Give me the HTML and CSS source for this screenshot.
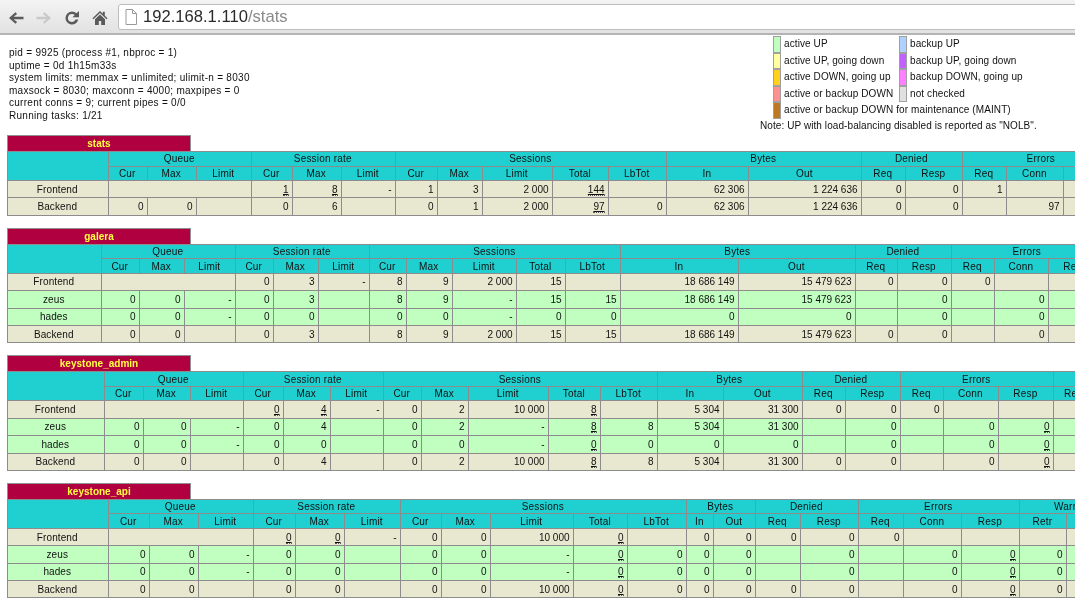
FILE: index.html
```html
<!DOCTYPE html>
<html lang="en">
<head>
<meta charset="utf-8">
<title>Statistics Report for HAProxy</title>
<link rel="stylesheet" href="styles.css">
</head>
<body>
<header class="toolbar">
  <svg class="nav" viewBox="0 0 16 16"><path class="ic-dark" d="M7.5 2.2 1 8l6.5 5.8 1.6-1.7L5.6 9.2H15.5V6.8H5.6l3.5-2.9z"/></svg>
  <svg class="nav" viewBox="0 0 16 16"><path class="ic-light" d="M8.5 2.2 15 8l-6.5 5.8-1.6-1.7 3.5-2.9H.5V6.8h9.900L6.900 3.900z"/></svg>
  <svg class="nav" viewBox="0 0 16 16"><path class="ic-dark" d="M8 1.500a6.500 6.500 0 1 0 6.300 8.100h-2.700A4 4 0 1 1 8 4c1.100 0 2 .4 2.700 1.100L8.500 7.300H15V.9l-2.500 2.400A6.500 6.500 0 0 0 8 1.500z"/></svg>
  <svg class="nav" viewBox="0 0 16 16"><path class="ic-dark" d="M8 1 .5 8.300l1 .9L8 3l6.500 6.200 1-.9L12.800 5.700V1.800h-2v2zM3 9.300V15h3.800v-4h2.400v4H13V9.300L8 4.500z"/></svg>
  <div class="address">
    <svg class="doc" viewBox="0 0 12 16"><path class="doc-line" d="M1 .5h6.500L11.500 4.500V15.500H1zM7.500.5v4h4"/></svg>
    <span class="host">192.168.1.110</span><span class="path">/stats</span>
  </div>
</header>

<section class="top">
  <div class="info">
    <div>pid = 9925 (process #1, nbproc = 1)</div>
    <div>uptime = 0d 1h15m33s</div>
    <div>system limits: memmax = unlimited; ulimit-n = 8030</div>
    <div>maxsock = 8030; maxconn = 4000; maxpipes = 0</div>
    <div>current conns = 9; current pipes = 0/0</div>
    <div>Running tasks: 1/21</div>
  </div>
  <div class="legend">
    <div class="legend-grid">
      <i class="sw active3"></i><span>active UP</span>
      <i class="sw backup3"></i><span>backup UP</span>
      <i class="sw active2"></i><span>active UP, going down</span>
      <i class="sw backup2"></i><span>backup UP, going down</span>
      <i class="sw active1"></i><span>active DOWN, going up</span>
      <i class="sw backup1"></i><span>backup DOWN, going up</span>
      <i class="sw active0"></i><span>active or backup DOWN</span>
      <i class="sw unchecked"></i><span>not checked</span>
      <i class="sw maint"></i><span class="wide">active or backup DOWN for maintenance (MAINT)</span>
    </div>
    <div class="note">Note: UP with load-balancing disabled is reported as "NOLB".</div>
  </div>
</section>

<section class="proxy">
  <div class="pxname">stats</div>
  <table class="tbl t-stats">
    <colgroup><col class="w101"><col class="w39"><col class="w49"><col class="w55"><col class="w41"><col class="w49"><col class="w54"><col class="w42"><col class="w45"><col class="w70"><col class="w56"><col class="w58"><col class="w82"><col class="w113"><col class="w44"><col class="w57"><col class="w44"><col class="w57"><col class="w57"></colgroup>
    <thead>
      <tr class="h1"><th rowspan="2"></th><th colspan="3">Queue</th><th colspan="3">Session rate</th><th colspan="5">Sessions</th><th colspan="2">Bytes</th><th colspan="2">Denied</th><th colspan="3">Errors</th></tr>
      <tr class="h2"><th>Cur</th><th>Max</th><th>Limit</th><th>Cur</th><th>Max</th><th>Limit</th><th>Cur</th><th>Max</th><th>Limit</th><th>Total</th><th>LbTot</th><th>In</th><th>Out</th><th>Req</th><th>Resp</th><th>Req</th><th>Conn</th><th>Resp</th></tr>
    </thead>
    <tbody>
      <tr class="frontend"><th>Frontend</th><td colspan="3"></td><td><u>1</u></td><td><u>8</u></td><td>-</td><td>1</td><td>3</td><td>2 000</td><td><u>144</u></td><td></td><td>62 306</td><td>1 224 636</td><td>0</td><td>0</td><td>1</td><td></td><td></td></tr>
      <tr class="frontend"><th>Backend</th><td>0</td><td>0</td><td></td><td>0</td><td>6</td><td></td><td>0</td><td>1</td><td>2 000</td><td><u>97</u></td><td>0</td><td>62 306</td><td>1 224 636</td><td>0</td><td>0</td><td></td><td>97</td><td>0</td></tr>
    </tbody>
  </table>
</section>

<section class="proxy">
  <div class="pxname">galera</div>
  <table class="tbl t-galera">
    <colgroup><col class="w94"><col class="w38"><col class="w45"><col class="w51"><col class="w38"><col class="w45"><col class="w51"><col class="w37"><col class="w46"><col class="w64"><col class="w49"><col class="w55"><col class="w118"><col class="w117"><col class="w42"><col class="w54"><col class="w43"><col class="w54"><col class="w55"></colgroup>
    <thead>
      <tr class="h1"><th rowspan="2"></th><th colspan="3">Queue</th><th colspan="3">Session rate</th><th colspan="5">Sessions</th><th colspan="2">Bytes</th><th colspan="2">Denied</th><th colspan="3">Errors</th></tr>
      <tr class="h2"><th>Cur</th><th>Max</th><th>Limit</th><th>Cur</th><th>Max</th><th>Limit</th><th>Cur</th><th>Max</th><th>Limit</th><th>Total</th><th>LbTot</th><th>In</th><th>Out</th><th>Req</th><th>Resp</th><th>Req</th><th>Conn</th><th>Resp</th></tr>
    </thead>
    <tbody>
      <tr class="frontend"><th>Frontend</th><td colspan="3"></td><td>0</td><td>3</td><td>-</td><td>8</td><td>9</td><td>2 000</td><td>15</td><td></td><td>18 686 149</td><td>15 479 623</td><td>0</td><td>0</td><td>0</td><td></td><td></td></tr>
      <tr class="active"><th>zeus</th><td>0</td><td>0</td><td>-</td><td>0</td><td>3</td><td></td><td>8</td><td>9</td><td>-</td><td>15</td><td>15</td><td>18 686 149</td><td>15 479 623</td><td></td><td>0</td><td></td><td>0</td><td>0</td></tr>
      <tr class="active"><th>hades</th><td>0</td><td>0</td><td>-</td><td>0</td><td>0</td><td></td><td>0</td><td>0</td><td>-</td><td>0</td><td>0</td><td>0</td><td>0</td><td></td><td>0</td><td></td><td>0</td><td>0</td></tr>
      <tr class="frontend"><th>Backend</th><td>0</td><td>0</td><td></td><td>0</td><td>3</td><td></td><td>8</td><td>9</td><td>2 000</td><td>15</td><td>15</td><td>18 686 149</td><td>15 479 623</td><td>0</td><td>0</td><td></td><td>0</td><td>0</td></tr>
    </tbody>
  </table>
</section>

<section class="proxy">
  <div class="pxname">keystone_admin</div>
  <table class="tbl t-admin">
    <colgroup><col class="w97"><col class="w39"><col class="w47"><col class="w53"><col class="w40"><col class="w47"><col class="w53"><col class="w38"><col class="w47"><col class="w80"><col class="w52"><col class="w57"><col class="w66"><col class="w79"><col class="w43"><col class="w55"><col class="w43"><col class="w55"><col class="w55"><col class="w42"></colgroup>
    <thead>
      <tr class="h1"><th rowspan="2"></th><th colspan="3">Queue</th><th colspan="3">Session rate</th><th colspan="5">Sessions</th><th colspan="2">Bytes</th><th colspan="2">Denied</th><th colspan="3">Errors</th><th></th></tr>
      <tr class="h2"><th>Cur</th><th>Max</th><th>Limit</th><th>Cur</th><th>Max</th><th>Limit</th><th>Cur</th><th>Max</th><th>Limit</th><th>Total</th><th>LbTot</th><th>In</th><th>Out</th><th>Req</th><th>Resp</th><th>Req</th><th>Conn</th><th>Resp</th><th>Retr</th></tr>
    </thead>
    <tbody>
      <tr class="frontend"><th>Frontend</th><td colspan="3"></td><td><u>0</u></td><td><u>4</u></td><td>-</td><td>0</td><td>2</td><td>10 000</td><td><u>8</u></td><td></td><td>5 304</td><td>31 300</td><td>0</td><td>0</td><td>0</td><td></td><td></td><td></td></tr>
      <tr class="active"><th>zeus</th><td>0</td><td>0</td><td>-</td><td>0</td><td>4</td><td></td><td>0</td><td>2</td><td>-</td><td><u>8</u></td><td>8</td><td>5 304</td><td>31 300</td><td></td><td>0</td><td></td><td>0</td><td><u>0</u></td><td></td></tr>
      <tr class="active"><th>hades</th><td>0</td><td>0</td><td>-</td><td>0</td><td>0</td><td></td><td>0</td><td>0</td><td>-</td><td><u>0</u></td><td>0</td><td>0</td><td>0</td><td></td><td>0</td><td></td><td>0</td><td><u>0</u></td><td></td></tr>
      <tr class="frontend"><th>Backend</th><td>0</td><td>0</td><td></td><td>0</td><td>4</td><td></td><td>0</td><td>2</td><td>10 000</td><td><u>8</u></td><td>8</td><td>5 304</td><td>31 300</td><td>0</td><td>0</td><td></td><td>0</td><td><u>0</u></td><td></td></tr>
    </tbody>
  </table>
</section>

<section class="proxy">
  <div class="pxname">keystone_api</div>
  <table class="tbl t-api">
    <colgroup><col class="w101"><col class="w41"><col class="w49"><col class="w55"><col class="w42"><col class="w49"><col class="w56"><col class="w41"><col class="w49"><col class="w83"><col class="w54"><col class="w59"><col class="w27"><col class="w42"><col class="w45"><col class="w58"><col class="w45"><col class="w58"><col class="w58"><col class="w47"><col class="w67"></colgroup>
    <thead>
      <tr class="h1"><th rowspan="2"></th><th colspan="3">Queue</th><th colspan="3">Session rate</th><th colspan="5">Sessions</th><th colspan="2">Bytes</th><th colspan="2">Denied</th><th colspan="3">Errors</th><th colspan="2">Warnings</th></tr>
      <tr class="h2"><th>Cur</th><th>Max</th><th>Limit</th><th>Cur</th><th>Max</th><th>Limit</th><th>Cur</th><th>Max</th><th>Limit</th><th>Total</th><th>LbTot</th><th>In</th><th>Out</th><th>Req</th><th>Resp</th><th>Req</th><th>Conn</th><th>Resp</th><th>Retr</th><th>Redis</th></tr>
    </thead>
    <tbody>
      <tr class="frontend"><th>Frontend</th><td colspan="3"></td><td><u>0</u></td><td><u>0</u></td><td>-</td><td>0</td><td>0</td><td>10 000</td><td><u>0</u></td><td></td><td>0</td><td>0</td><td>0</td><td>0</td><td>0</td><td></td><td></td><td></td><td></td></tr>
      <tr class="active"><th>zeus</th><td>0</td><td>0</td><td>-</td><td>0</td><td>0</td><td></td><td>0</td><td>0</td><td>-</td><td><u>0</u></td><td>0</td><td>0</td><td>0</td><td></td><td>0</td><td></td><td>0</td><td><u>0</u></td><td>0</td><td>0</td></tr>
      <tr class="active"><th>hades</th><td>0</td><td>0</td><td>-</td><td>0</td><td>0</td><td></td><td>0</td><td>0</td><td>-</td><td><u>0</u></td><td>0</td><td>0</td><td>0</td><td></td><td>0</td><td></td><td>0</td><td><u>0</u></td><td>0</td><td>0</td></tr>
      <tr class="frontend"><th>Backend</th><td>0</td><td>0</td><td></td><td>0</td><td>0</td><td></td><td>0</td><td>0</td><td>10 000</td><td><u>0</u></td><td>0</td><td>0</td><td>0</td><td>0</td><td>0</td><td></td><td>0</td><td><u>0</u></td><td>0</td><td>0</td></tr>
    </tbody>
  </table>
</section>
</body>
</html>
```
FILE: styles.css
```css
html, body {
  margin: 0;
  height: 605px;
  overflow: hidden;
  background: #fff;
}
body {
  font-family: "Liberation Sans", Arial, sans-serif;
  font-size: 10px;
  color: #111;
  filter: blur(.3px);
}

/* browser toolbar */
.toolbar {
  height: 35px;
  box-sizing: border-box;
  display: flex;
  align-items: flex-start;
  gap: 12px;
  padding: 4px 0 0 8px;
  background: linear-gradient(#f3f3f3, #e2e2e2);
  border-bottom: 2px solid #b4b4b4;
}
.nav { width: 16px; height: 16px; margin-top: 6px; flex: none; }
.ic-dark { fill: #5a5a5a; }
.ic-light { fill: #c9c9c9; }
.address {
  flex: 1;
  margin-left: -2px;
  margin-right: -3px;
  height: 26px;
  box-sizing: border-box;
  display: flex;
  align-items: center;
  padding-left: 6px;
  background: #fff;
  border: 1px solid #bdbdbd;
  border-radius: 3px;
  font-size: 16.6px;
}
.doc { width: 12px; height: 16px; margin-right: 6px; }
.doc-line { fill: none; stroke: #9a9a9a; stroke-width: 1; }
.host { color: #2a2a2a; }
.path { color: #8a8a8a; }

/* top block */
.top {
  height: 99px;
  display: flex;
  justify-content: space-between;
  padding: 1px 25px 0 9px;
}
.info { padding-top: 11px; line-height: 12.5px; letter-spacing: .28px; }
.legend { width: 290px; }
.legend-grid {
  display: grid;
  margin-left: 13px;
  grid-template-columns: 8px 118px 8px auto;
  grid-auto-rows: 16.6px;
  line-height: 16px;
}
.legend-grid span { padding-left: 3px; letter-spacing: .1px; white-space: nowrap; }
.legend-grid .wide { grid-column: span 3; }
.note { line-height: 13px; letter-spacing: .08px; white-space: nowrap; }
.sw { border: 1px solid #a0a0a0; box-sizing: border-box; display: block; }
.active3 { background: #c0ffc0; }
.active2 { background: #ffffa0; }
.active1 { background: #ffd020; }
.active0 { background: #ff9090; }
.maint { background: #c07820; }
.backup3 { background: #b0d0ff; }
.backup2 { background: #c060ff; }
.backup1 { background: #ff80ff; }
.unchecked { background: #e0e0e0; }

/* proxy tables */
.proxy { margin: 0 0 12px 7px; }
.pxname {
  width: 182px;
  height: 16px;
  line-height: 16px;
  background: #b00040;
  color: #ffff40;
  text-align: center;
  font-weight: bold;
  border: 1px solid #909090;
  border-bottom: 0;
  margin-bottom: -1px;
}
.tbl {
  border-collapse: collapse;
  table-layout: fixed;
  position: relative;
}
.t-stats { width: 1113px; }
.t-galera { width: 1096px; }
.t-admin { width: 1088px; }
.t-api { width: 1126px; }
.tbl th, .tbl td {
  border: 1px solid #8c8c8c;
  padding: 0 3.5px 0 2px;
  font-size: 10px;
  font-weight: normal;
  white-space: nowrap;
  overflow: hidden;
}
.tbl td { text-align: right; }
.tbl th { text-align: center; letter-spacing: .2px; }
.tbl thead th { background: #20d0d0; }
.h1 { height: 14.5px; }
.h2 { height: 14.5px; }
.frontend, .active { height: 17.4px; }
.frontend > * { background: #e8e8d0; }
.active > * { background: #c0ffc0; }
.tbl tbody th { letter-spacing: .1px; }
.tbl u {
  text-decoration: underline;
  border-bottom: 1px dotted #555;
}

.w27 { width: 27px; } .w37 { width: 37px; } .w38 { width: 38px; } .w39 { width: 39px; }
.w40 { width: 40px; } .w41 { width: 41px; } .w42 { width: 42px; } .w43 { width: 43px; }
.w44 { width: 44px; } .w45 { width: 45px; } .w46 { width: 46px; } .w47 { width: 47px; }
.w49 { width: 49px; } .w51 { width: 51px; } .w52 { width: 52px; } .w53 { width: 53px; }
.w54 { width: 54px; } .w55 { width: 55px; } .w56 { width: 56px; } .w57 { width: 57px; }
.w58 { width: 58px; } .w59 { width: 59px; } .w64 { width: 64px; } .w66 { width: 66px; }
.w67 { width: 67px; } .w70 { width: 70px; } .w79 { width: 79px; } .w80 { width: 80px; }
.w82 { width: 82px; } .w83 { width: 83px; } .w94 { width: 94px; } .w97 { width: 97px; }
.w101 { width: 101px; } .w113 { width: 113px; } .w117 { width: 117px; } .w118 { width: 118px; }
```
